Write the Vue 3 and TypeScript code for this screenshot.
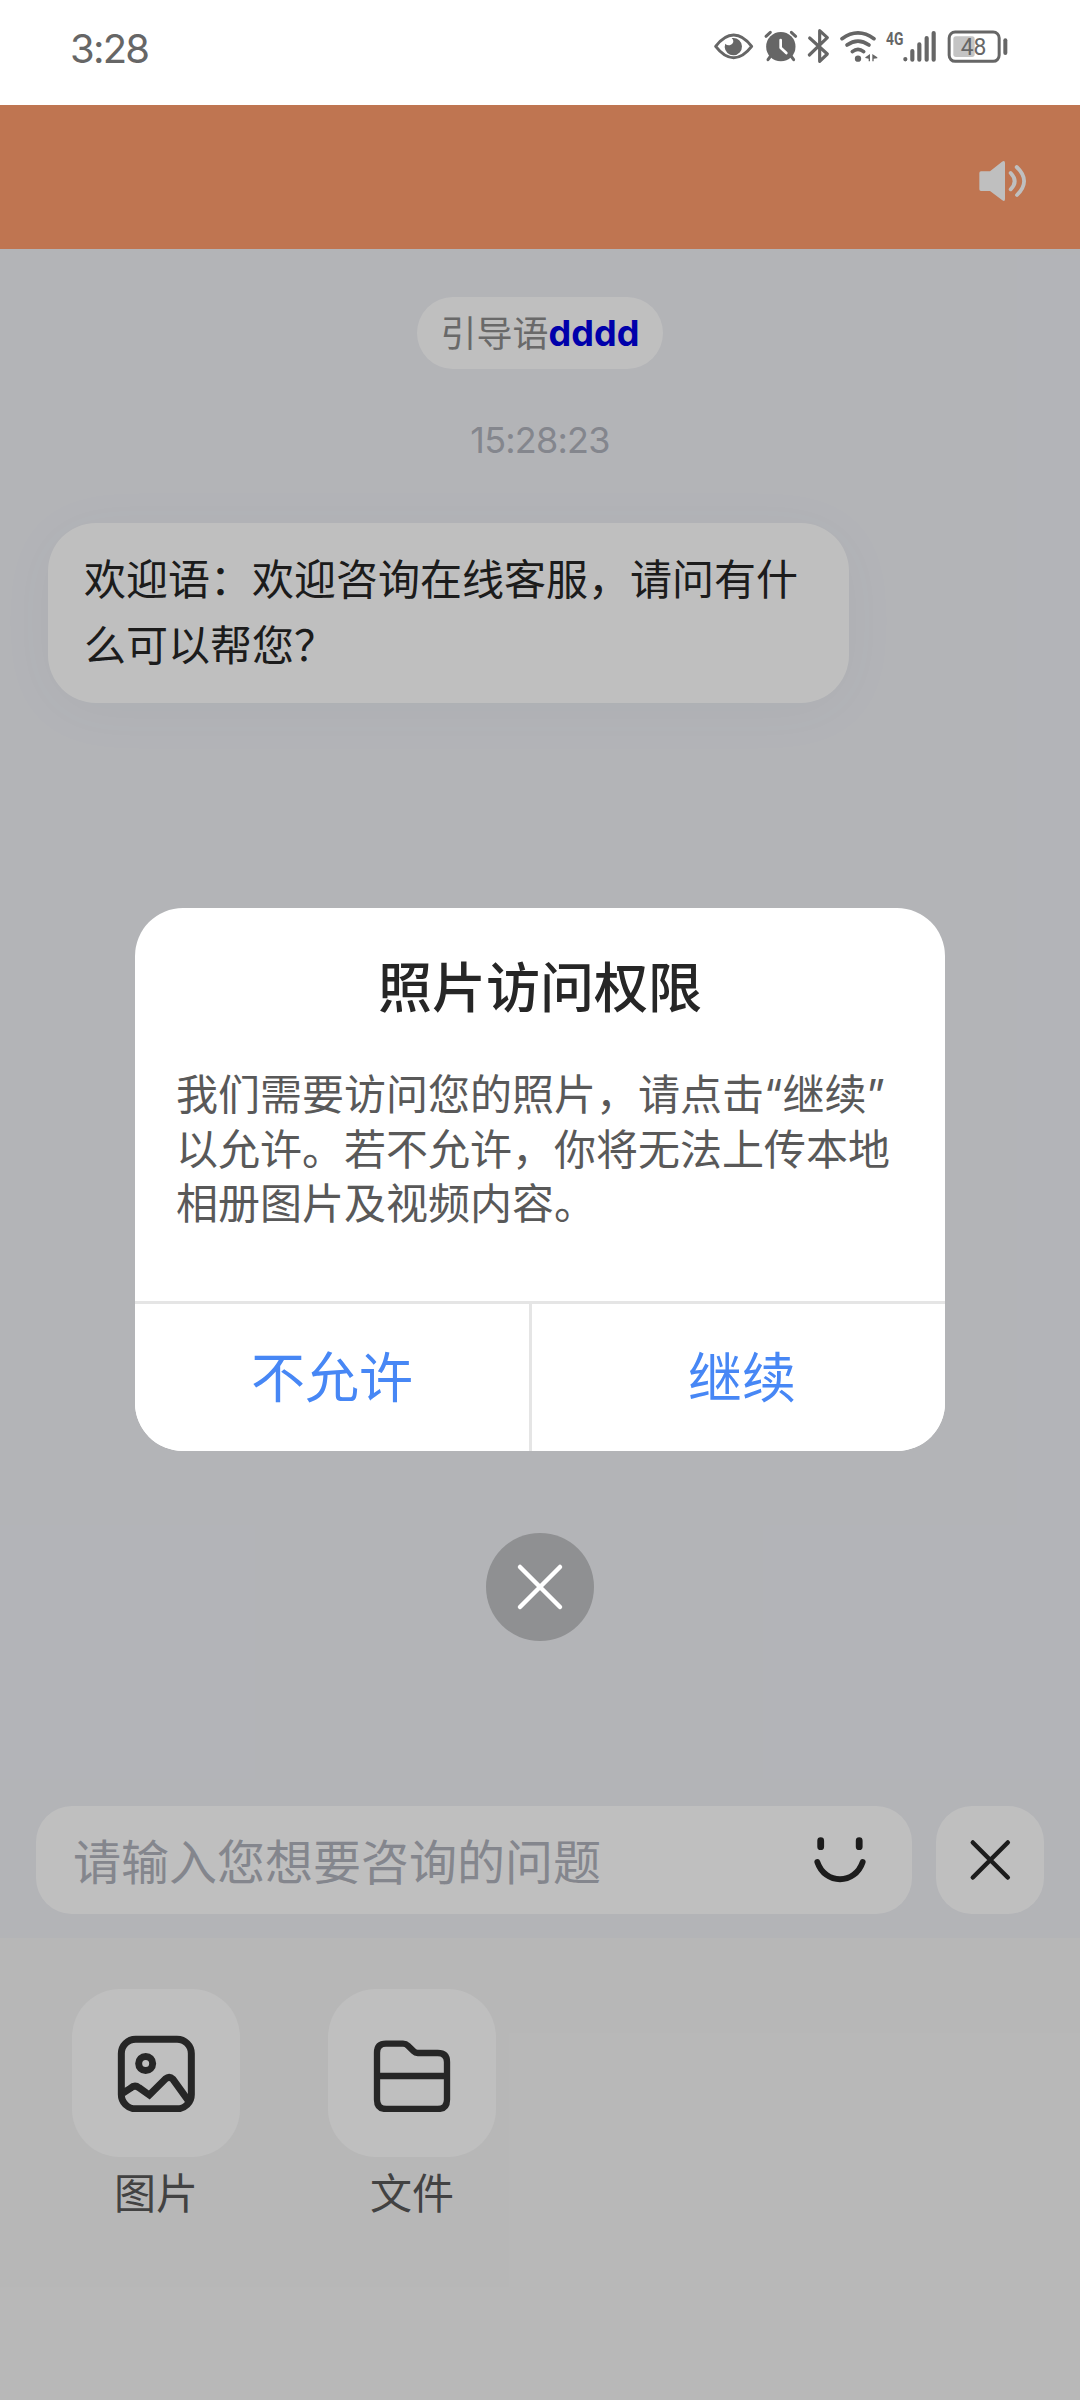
<script setup lang="ts">
import { ref } from 'vue'

interface Tool {
  name: string
  icon: 'image' | 'folder'
}

const clock = ref('3:28')
const battery = ref(48)
const sentAt = ref('15:28:23')
const welcome = '欢迎语：欢迎咨询在线客服，请问有什么可以帮您？'
const tools: Tool[] = [
  { name: '图片', icon: 'image' },
  { name: '文件', icon: 'folder' },
]
</script>

<template>
  <div class="screen">
    <div class="status">
      <span class="clock">{{ clock }}</span>
      <div class="status-icons">
        <svg width="46.667" height="40" viewBox="40 50 140 120">
          <path d="M48 108Q74 74 102 74T156 108Q130 142 102 142T48 108Z" fill="none" stroke="#666" stroke-width="9" stroke-linejoin="round" />
          <path d="M100 83a26 26 0 1 1-25 27l2-10a14 14 0 0 0 24-5q1-7-5-11Z" fill="#666" />
        </svg>
        <svg width="43.333" height="40" viewBox="180 50 130 120">
          <circle cx="242.500" cy="109" r="44" fill="#666" />
          <path d="M198 78l13-12M287 78l-13-12M212 137l-8 11M273 137l8 11" stroke="#666" stroke-width="9" stroke-linecap="round" />
          <path d="M242 89v23l17 16" fill="none" stroke="#fff" stroke-width="8" stroke-linecap="round" stroke-linejoin="round" />
        </svg>
        <svg width="31.667" height="40" viewBox="310 50 95 120">
          <path d="M330 83l53 48-23 22V61l23 21-54 52" fill="none" stroke="#666" stroke-width="9.500" stroke-linecap="round" stroke-linejoin="round" />
        </svg>
        <svg width="46.667" height="40" viewBox="405 50 140 120">
          <g fill="none" stroke="#666" stroke-width="11" stroke-linecap="round">
            <path d="M426 85Q474 50 522 85" />
            <path d="M441 104Q474 80 507 104" />
            <path d="M457 124Q474 110 491 124" />
          </g>
          <circle cx="474" cy="145" r="9.500" fill="#666" />
          <path d="M510 131v22h-4v-8l-10-2v-2ZM517 131l15 10v3l-11 1v8h-4Z" fill="#666" />
        </svg>
        <svg width="60" height="40" viewBox="545 50 180 120">
          <text x="557" y="103" class="net" textLength="52" lengthAdjust="spacingAndGlyphs">4G</text>
          <path d="M615 146v1M636 122v26M657 102v46M679 83v65M700 68v80" stroke="#666" stroke-width="12.500" stroke-linecap="round" />
        </svg>
        <svg width="68.333" height="40" viewBox="725 50 205 120">
          <rect x="746.500" y="65" width="150" height="88" rx="18" fill="none" stroke="#666" stroke-width="9" />
          <rect x="759" y="78" width="64" height="62" rx="8" fill="#c4c4c4" />
          <path d="M915 90v38" stroke="#666" stroke-width="12" stroke-linecap="round" />
          <text x="781" y="135" class="batt" textLength="77" lengthAdjust="spacingAndGlyphs">{{ battery }}</text>
        </svg>
      </div>
    </div>

    <header class="bar">
      <svg width="48" height="44" viewBox="0 0 144 132">
        <path d="M9 37h27L72 8q9-5 9 4v108q0 9-8 4L36 96H9q-5 0-5-5V42q0-5 5-5Z" fill="#fff" />
        <path d="M98 42q24 25 0 49M116 24q44 42 1 84" fill="none" stroke="#fff" stroke-width="11.500" stroke-linecap="round" />
      </svg>
    </header>

    <main class="chat">
      <div class="guide">引导语<b>dddd</b></div>
      <div class="time">{{ sentAt }}</div>
      <div class="bubble">{{ welcome }}</div>
    </main>

    <div class="compose">
      <div class="field">
        <span>请输入您想要咨询的问题</span>
        <svg width="54" height="48" viewBox="0 0 54 48">
          <path d="M7.700 4.700v6M46.200 4.700v6" stroke="#262626" stroke-width="6.800" stroke-linecap="round" />
          <path d="M4.300 26C12 49 42 49 49.700 26" fill="none" stroke="#262626" stroke-width="5.800" stroke-linecap="round" />
        </svg>
      </div>
      <button class="toggle">
        <svg width="48" height="48" viewBox="0 0 48 48">
          <path d="M6.800 6.500l35 35M41.800 6.500l-35 35" stroke="#262626" stroke-width="4.500" stroke-linecap="round" />
        </svg>
      </button>
    </div>

    <div class="tools">
      <div v-for="tool in tools" :key="tool.name" class="tool">
        <div class="tile">
          <svg v-if="tool.icon === 'image'" width="78" height="78" viewBox="0 -4 234 234" fill="none" stroke="#333" stroke-width="21">
            <rect x="13" y="11.500" width="210" height="209" rx="43" />
            <circle cx="86" cy="84.500" r="21" />
            <path d="M18 173L40 159Q53 147 66 157L97 179 145 131Q157 121 168 132L214 196" />
          </svg>
          <svg v-else width="78" height="78" viewBox="0 -4 234 234" fill="none" stroke="#333" stroke-width="19">
            <path d="M12 52Q12 25 39 25H90Q99 25 105 31L122 48Q127 53 134 53H194Q222 53 222 80V193Q222 221 194 221H40Q12 221 12 193ZM12 122H222" />
          </svg>
        </div>
        <span>{{ tool.name }}</span>
      </div>
    </div>

    <div class="overlay">
      <section class="dialog">
        <h2>照片访问权限</h2>
        <p>我们需要访问您的照片，请点击“继续”<br>以允许。若不允许，你将无法上传本地<br>相册图片及视频内容。</p>
        <div class="actions">
          <button class="deny">不允许</button>
          <button class="allow">继续</button>
        </div>
      </section>
      <button class="close">
        <svg width="48" height="48" viewBox="0 0 48 48">
          <path d="M4 4l40 40M44 4L4 44" stroke="#fff" stroke-width="4.500" stroke-linecap="round" />
        </svg>
      </button>
    </div>
  </div>
</template>

<style scoped>
.screen {
  position: relative;
  display: flex;
  flex-direction: column;
  width: 1080px;
  height: 2400px;
  overflow: hidden;
  background: #eff0f5;
  font-family: "Noto Sans CJK SC", sans-serif;
}
button {
  padding: 0;
  border: 0;
  font: inherit;
}
svg {
  display: block;
  flex: none;
}
.status {
  display: flex;
  flex: none;
  justify-content: space-between;
  box-sizing: border-box;
  height: 105px;
  padding: 26.700px 70px 0 70px;
  background: #fff;
}
.clock {
  color: #666;
  font-family: Inter, sans-serif;
  font-size: 40px;
  line-height: 43px;
  letter-spacing: -1.800px;
}
.status-icons {
  display: flex;
}
.net {
  fill: #666;
  font: 700 56px Roboto, sans-serif;
}
.batt {
  fill: #666;
  font: 400 74px Roboto, sans-serif;
}
.bar {
  display: flex;
  flex: none;
  align-items: center;
  justify-content: flex-end;
  box-sizing: border-box;
  height: 144px;
  padding: 7px 54px 0 0;
  background: #ff9c6c;
}
.chat {
  display: flex;
  flex: 1;
  flex-direction: column;
  align-items: center;
  padding-top: 48px;
}
.guide {
  display: flex;
  align-items: center;
  justify-content: center;
  box-sizing: border-box;
  width: 246px;
  height: 72px;
  padding-bottom: 4px;
  border-radius: 36px;
  background: #fff;
  color: #8c8c8c;
  font-size: 36px;
  line-height: 68px;
  white-space: nowrap;
}
.guide b {
  padding-top: 3px;
  color: #0000e4;
  font-family: Inter, sans-serif;
}
.time {
  margin-top: 47px;
  color: #b0b3bd;
  font-family: Inter, sans-serif;
  font-size: 36px;
  line-height: 48px;
  letter-spacing: -0.800px;
}
.bubble {
  align-self: flex-start;
  box-sizing: border-box;
  width: 801px;
  margin: 59px 0 0 48px;
  padding: 21px 36px 27px;
  border-radius: 48px;
  background: #fff;
  box-shadow: 0 8px 60px rgba(0, 100, 90, 0.04);
  color: #262626;
  font-size: 42px;
  line-height: 66px;
}
.compose {
  display: flex;
  flex: none;
  gap: 24px;
  height: 108px;
  padding: 0 36px 24px;
}
.field {
  display: flex;
  flex: 1;
  align-items: center;
  justify-content: space-between;
  padding: 0 45px 0 37px;
  border-radius: 36px;
  background: #fff;
  color: #b0b3bd;
  font-size: 48px;
  line-height: 72px;
}
.field span {
  padding-bottom: 2px;
}
.toggle {
  display: flex;
  align-items: center;
  justify-content: center;
  width: 108px;
  border-radius: 36px;
  background: #fff;
}
.tools {
  display: flex;
  flex: none;
  gap: 88px;
  box-sizing: border-box;
  height: 462px;
  padding: 51px 72px 0;
  background: #f5f5f5;
}
.tool {
  display: flex;
  flex-direction: column;
  align-items: center;
  color: #595959;
  font-size: 42px;
  line-height: 60px;
}
.tile {
  display: flex;
  align-items: center;
  justify-content: center;
  width: 168px;
  height: 168px;
  margin-bottom: 4px;
  border-radius: 48px;
  background: #fff;
}
.overlay {
  position: absolute;
  inset: 105px 0 0;
  display: flex;
  flex-direction: column;
  align-items: center;
  padding-top: 803px;
  background: rgba(0, 0, 0, 0.25);
}
.dialog {
  display: flex;
  flex-direction: column;
  width: 810px;
  height: 543px;
  overflow: hidden;
  border-radius: 48px;
  background: #fff;
}
h2 {
  margin: 37px 0 0;
  color: #262626;
  font-size: 54px;
  font-weight: 500;
  line-height: 80px;
  text-align: center;
}
p {
  flex: 1;
  margin: 43px 0 0 41px;
  color: #595959;
  font-family: Inter, "Noto Sans CJK SC", sans-serif;
  font-size: 42px;
  line-height: 54.500px;
  white-space: nowrap;
}
.actions {
  display: flex;
  flex: none;
  height: 147px;
  border-top: 3px solid #e5e5e5;
  color: #4787f5;
  font-size: 54px;
}
.actions button {
  padding-bottom: 7px;
  background: #fff;
  color: inherit;
}
.actions .deny {
  box-sizing: border-box;
  width: 397px;
  border-right: 3px solid #e5e5e5;
}
.actions .allow {
  flex: 1;
  padding-left: 7px;
}
.close {
  display: flex;
  flex: none;
  align-items: center;
  justify-content: center;
  width: 108px;
  height: 108px;
  margin-top: 82px;
  border-radius: 50%;
  background: #8f9092;
}
</style>

<style>
body {
  margin: 0;
}
</style>
